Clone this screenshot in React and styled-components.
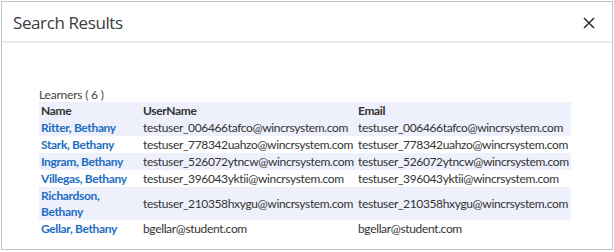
import React from "react";
import styled, { createGlobalStyle } from "styled-components";

const GlobalStyle = createGlobalStyle`
  html, body {
    margin: 0;
    padding: 0;
    background: #ffffff;
  }
  body {
    font-family: "Lato", "Liberation Sans", sans-serif;
  }
`;

const Page = styled.div`
  padding: 1px 0 0 1px;
`;

const Dialog = styled.div`
  box-sizing: border-box;
  width: 612px;
  height: 249px;
  border: 1px solid #c4c4c4;
  background: #fff;
  display: flex;
  flex-direction: column;
`;

const Header = styled.div`
  box-sizing: border-box;
  height: 41px;
  display: flex;
  align-items: center;
  justify-content: space-between;
  padding: 0 17px 0 11px;
  border-bottom: 2px solid #ebebeb;
`;

const Title = styled.h2`
  margin: 0;
  font-family: "Open Sans", "Liberation Sans", sans-serif;
  font-weight: 400;
  font-size: 17px;
  letter-spacing: -0.4px;
  color: #3c3c3c;
  padding-top: 1px;
`;

const CloseButton = styled.button`
  border: none;
  background: none;
  padding: 0;
  width: 12px;
  height: 12px;
  display: flex;
  cursor: pointer;
  margin-top: 2px;
`;

const Body = styled.div`
  padding: 44px 0 0 37px;
`;

const Caption = styled.div`
  font-size: 12px;
  letter-spacing: -0.2px;
  color: #444;
  line-height: 15px;
`;

const Table = styled.table`
  border-collapse: collapse;
  width: 532px;
  font-size: 12px;
  letter-spacing: -0.35px;
  color: #333;
  table-layout: fixed;
`;

const Row = styled.tr`
  background: ${(p) => (p.$shaded ? "#eef0fb" : "#ffffff")};
`;

const HeadCell = styled.th`
  text-align: left;
  font-weight: 700;
  padding: 0.5px 2px;
  line-height: 16px;
  width: ${(p) => p.$w - 4}px;
  color: #333;
`;

const Cell = styled.td`
  padding: 0.5px 2px;
  line-height: 16px;
  vertical-align: middle;
  white-space: nowrap;
`;

const NameCell = styled(Cell)`
  white-space: normal;
  font-weight: 700;
  color: #1b6ec2;
`;

const learners = [
  { name: "Ritter, Bethany", user: "testuser_006466tafco@wincrsystem.com", email: "testuser_006466tafco@wincrsystem.com" },
  { name: "Stark, Bethany", user: "testuser_778342uahzo@wincrsystem.com", email: "testuser_778342uahzo@wincrsystem.com" },
  { name: "Ingram, Bethany", user: "testuser_526072ytncw@wincrsystem.com", email: "testuser_526072ytncw@wincrsystem.com" },
  { name: "Villegas, Bethany", user: "testuser_396043yktii@wincrsystem.com", email: "testuser_396043yktii@wincrsystem.com" },
  { name: "Richardson, Bethany", user: "testuser_210358hxygu@wincrsystem.com", email: "testuser_210358hxygu@wincrsystem.com" },
  { name: "Gellar, Bethany", user: "bgellar@student.com", email: "bgellar@student.com" },
];

export default function App() {
  return (
    <Page>
      <GlobalStyle />
      <Dialog>
        <Header>
          <Title>Search Results</Title>
          <CloseButton aria-label="Close">
            <svg width="12" height="12" viewBox="0 0 12 12">
              <path d="M1 1 L11 11 M11 1 L1 11" stroke="#333" strokeWidth="1.6" fill="none" />
            </svg>
          </CloseButton>
        </Header>
        <Body>
          <Caption>Learners ( {learners.length} )</Caption>
          <Table>
            <thead>
              <Row $shaded>
                <HeadCell $w={102}>Name</HeadCell>
                <HeadCell $w={215}>UserName</HeadCell>
                <HeadCell $w={215}>Email</HeadCell>
              </Row>
            </thead>
            <tbody>
              {learners.map((l, i) => (
                <Row key={l.name} $shaded={i % 2 === 0}>
                  <NameCell>{l.name}</NameCell>
                  <Cell>{l.user}</Cell>
                  <Cell>{l.email}</Cell>
                </Row>
              ))}
            </tbody>
          </Table>
        </Body>
      </Dialog>
    </Page>
  );
}
